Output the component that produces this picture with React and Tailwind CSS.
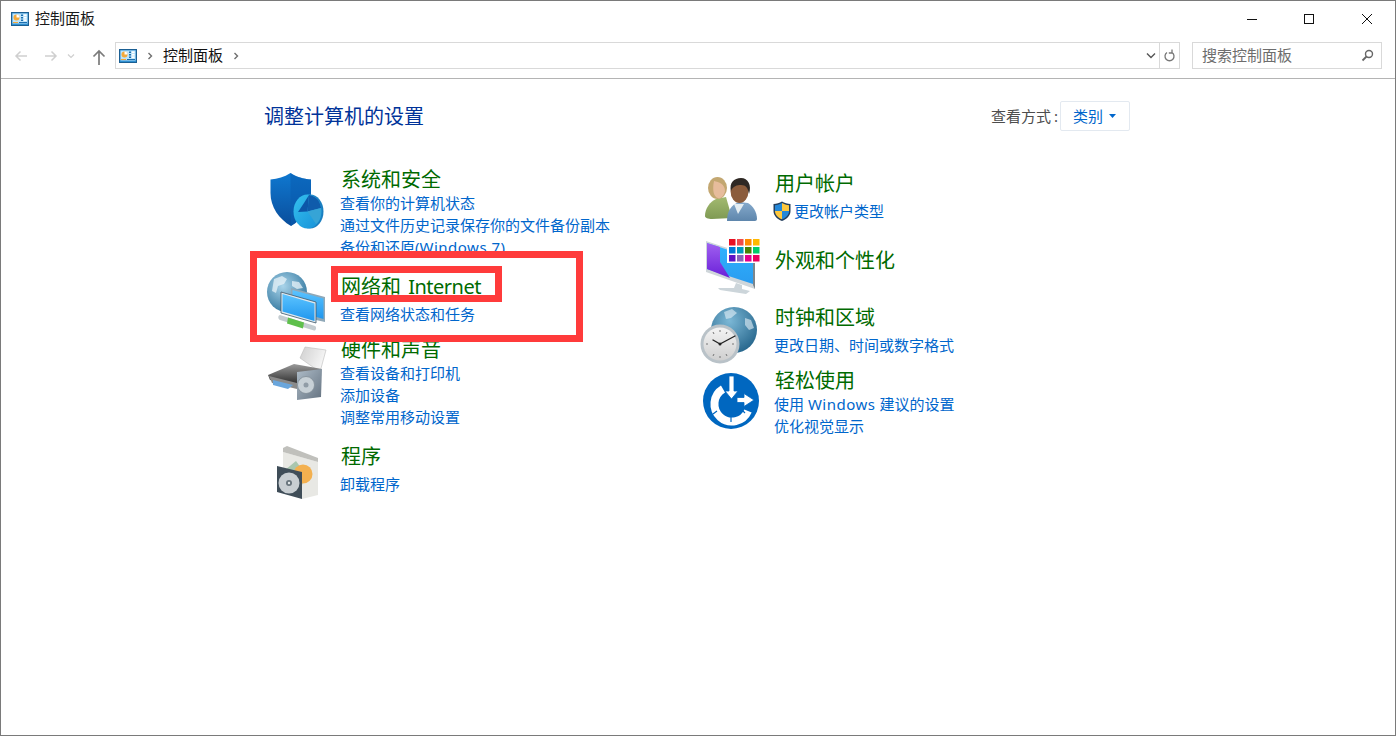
import React from "react";

const Grad = ({ id, a, b, x2 = 0, y2 = 1 }) => (
  <linearGradient id={id} x1="0" y1="0" x2={x2} y2={y2}>
    <stop offset="0" stopColor={a} />
    <stop offset="1" stopColor={b} />
  </linearGradient>
);

const PanelIcon = () => (
  <svg width="18" height="14" viewBox="0 0 18 14" className="shrink-0">
    <rect x="0.500" y="0.500" width="17" height="13" fill="#2f8fd0" stroke="#1b5f93" />
    <rect x="1.500" y="1.500" width="15" height="10" fill="#bfe4fa" />
    <circle cx="5.500" cy="5.500" r="3" fill="#f2a93b" />
    <path d="M5.500 5.500V2.500A3 3 0 0 1 8.500 5.500Z" fill="#fff" />
    <rect x="10" y="2.500" width="2" height="1.500" fill="#1b6fb0" />
    <rect x="13" y="2.500" width="2.500" height="1.500" fill="#fff" />
    <rect x="10" y="5" width="2" height="1.500" fill="#1b6fb0" />
    <rect x="13" y="5" width="2.500" height="1.500" fill="#fff" />
    <rect x="10" y="7.500" width="2" height="1.500" fill="#1b6fb0" />
    <rect x="13" y="7.500" width="2.500" height="1.500" fill="#fff" />
    <rect x="2" y="10" width="5" height="1" fill="#f2a93b" />
    <rect x="8" y="10" width="8" height="1" fill="#1b6fb0" />
  </svg>
);

const SecurityIcon = () => (
  <svg width="75" height="75" viewBox="265 167 75 75" className="shrink-0 overflow-visible">
    <defs>
      <Grad id="sh" a="#0f78d0" b="#0a4e9c" />
      <Grad id="dk" a="#35c0ee" b="#1590d8" x2={1} />
    </defs>
    <path d="M290.500 173C284 177 278 179 270.500 179.500L270.500 193C270.500 207 279 219 291 226C302 220 311 207 311 193L311 179.500C303 179 297 177 290.500 173Z" fill="url(#sh)" />
    <path d="M290.500 173C297 177 303 179 311 179.500L311 193C311 205 303 217 291 226Z" fill="#0a5cb0" opacity="0.55" />
    <ellipse cx="310" cy="211.500" rx="13.500" ry="17" fill="#1a7fc0" />
    <ellipse cx="307.500" cy="211.500" rx="14" ry="17" fill="url(#dk)" />
    <path d="M307.500 211.500L309 195C316 196 320 201 321 208Z" fill="#0f5bab" />
    <path d="M307.500 211.500L321 208C322 215 320 221 316 224Z" fill="#36a4d6" />
    <path d="M307.500 211.500L298 212L304 203L309 195Z" fill="#0c56a8" />
  </svg>
);

const NetworkIcon = () => (
  <svg width="75" height="63" viewBox="265 274 75 63" className="shrink-0 overflow-visible">
    <defs>
      <radialGradient id="gl" cx="0.4" cy="0.35" r="0.75">
        <stop offset="0" stopColor="#a9d4ea" />
        <stop offset="1" stopColor="#2a7099" />
      </radialGradient>
      <Grad id="scr" a="#5cc4ff" b="#1f96ee" />
    </defs>
    <circle cx="287" cy="292" r="20" fill="url(#gl)" />
    <path d="M274 279l8-3 5 3-3 5-6 2-2 7-4-2zM292 281l7 1 4 6-6 1-5-3zM283 296l7 3-1 7-4 3-3-6z" fill="#e8f3f8" opacity="0.75" />
    <path d="M291 288L325 297V322L316 320V302L291 295Z" fill="#8fa8b8" />
    <path d="M292.500 290L323.500 298.500V319L292.500 310Z" fill="url(#scr)" />
    <path d="M281 292L316 302V323L281 313Z" fill="#dfe9ef" stroke="#3d5768" strokeWidth="0.800" />
    <path d="M282.500 294L314.500 303.500V321L282.500 311.500Z" fill="url(#scr)" />
    <path d="M280 315L315 326C317 327 316 331 314 330.500L280 320C277.500 319 278 315 280 315Z" fill="#c4ccd0" />
    <path d="M288 317.500L304 322.500L303 328.500L287 323.500Z" fill="#5fc04c" />
  </svg>
);

const HardwareIcon = () => (
  <svg width="75" height="75" viewBox="265 337 75 75" className="shrink-0 overflow-visible">
    <defs>
      <Grad id="pb" a="#9a9a9a" b="#2e2e2e" />
      <Grad id="sp" a="#aebcc8" b="#647280" x2={1} y2={1} />
      <Grad id="pp" a="#d0d0d0" b="#f6f6f6" x2={1} y2={0.4} />
    </defs>
    <path d="M300 358L305 347L326 350L320 372Z" fill="url(#pp)" stroke="#bcbcbc" strokeWidth="0.600" />
    <path d="M268 375L294 364L322 369L297 384L270 380Z" fill="url(#pb)" />
    <path d="M269 376L297 383V389L272 383Z" fill="#8a8a8a" />
    <path d="M273 380L293 385L288 389L273 385Z" fill="#6aa6dc" />
    <path d="M297 372L322 369L321 397L297 400Z" fill="url(#sp)" />
    <circle cx="306" cy="385" r="8.500" fill="#c7d0d6" stroke="#808d97" strokeWidth="0.800" />
    <circle cx="306" cy="385" r="2.500" fill="#909ca6" />
  </svg>
);

const ProgramIcon = () => (
  <svg width="75" height="60" viewBox="265 444 75 60" className="shrink-0 overflow-visible">
    <path d="M283 452L318 462V495L302 499L283 490Z" fill="#e8e8e4" />
    <path d="M283 448L287 446L318 458L318 462L283 452Z" fill="#c0c0bc" />
    <path d="M285 470L296 461L306 475L300 490Z" fill="#a9c6ae" />
    <circle cx="303" cy="474" r="9.500" fill="#f3b04f" />
    <path d="M277 466L302 472V499L277 492Z" fill="#3f4d58" />
    <circle cx="289" cy="483" r="10.500" fill="#c8ced2" />
    <circle cx="289" cy="483" r="3" fill="#68747c" />
    <circle cx="289" cy="483" r="1.200" fill="#e4e8ea" />
  </svg>
);

const UsersIcon = () => (
  <svg width="75" height="70" viewBox="699 171 75 70" className="shrink-0 overflow-visible">
    <defs>
      <Grad id="wg" a="#a3ba70" b="#7f9a54" />
      <Grad id="mb" a="#86aacc" b="#5e86ac" />
    </defs>
    <path d="M705 216C705 208 710 202 716 199L726 197L732 218L712 219C708 219 705 218 705 216Z" fill="url(#wg)" />
    <ellipse cx="717.500" cy="188" rx="9.500" ry="11" fill="#c3a771" />
    <path d="M714 181C719 182 725 184 725 191C724 196 721 199 718 198C714 197 712 191 714 181Z" fill="#e6bc9c" />
    <path d="M727 221C727 211 731 205 739 202L748 203C753 206 757 212 757 219C757 220 756 221 755 221Z" fill="url(#mb)" />
    <path d="M734 204L738 214L744 204Z" fill="#e4edf2" />
    <ellipse cx="739.500" cy="191" rx="9" ry="12" fill="#8b5c3c" />
    <path d="M731 191C729 183 734 178 741 178C748 178 752 185 749 194C748 188 746 185 741 185C737 185 733 186 731 191Z" fill="#2e2824" />
  </svg>
);

const AppearanceIcon = () => {
  const colors = ["#e81123", "#f04b4b", "#ff8c00", "#ffb900", "#0078d7", "#0099bc", "#498205", "#00cc6a", "#5c13c4", "#8764b8", "#e3008c", "#ea005e"];
  return (
    <svg width="75" height="57" viewBox="699 248 75 57" className="shrink-0 overflow-visible">
      <defs>
        <Grad id="ms" a="#2fb4ff" b="#2a9cf0" />
        <Grad id="mp" a="#a060f0" b="#6a20d8" />
      </defs>
      <path d="M706 241L755 257V289L706 272Z" fill="#cfd6da" />
      <path d="M707 243L753 258V284L707 269Z" fill="url(#ms)" />
      <path d="M707 243L720 247L720 262L730 278L707 269Z" fill="url(#mp)" />
      <path d="M753 258L755 257V289L753 285Z" fill="#7c868c" />
      <path d="M736 283L742 285V289L750 291L746 294L720 290L718 288L734 288Z" fill="#ccd5da" />
      <rect x="727" y="237" width="33" height="26" fill="#fff" />
      {colors.map((c, i) => (
        <rect key={i} x={729 + (i % 4) * 8} y={239 + Math.floor(i / 4) * 8} width="6.500" height="6.500" fill={c} />
      ))}
    </svg>
  );
};

const ClockIcon = () => (
  <svg width="75" height="63" viewBox="699 305 75 63" className="shrink-0 overflow-visible">
    <defs>
      <radialGradient id="cg" cx="0.4" cy="0.3" r="0.8">
        <stop offset="0" stopColor="#7cb8d6" />
        <stop offset="1" stopColor="#1f5f86" />
      </radialGradient>
      <Grad id="cf" a="#f4f4f4" b="#cfcfcf" />
    </defs>
    <circle cx="734" cy="330" r="23" fill="url(#cg)" />
    <path d="M724 312l8-3 5 4-6 5-5 1zM745 318l6 2 3 8-5 2-4-5z" fill="#e4f0f6" opacity="0.6" />
    <circle cx="720" cy="344" r="19.500" fill="#b9c2c8" />
    <circle cx="720" cy="344" r="16.500" fill="url(#cf)" />
    <path d="M720 344L713 340M720 344L735 336" stroke="#222" strokeWidth="1.400" strokeLinecap="round" />
    <circle cx="720" cy="344" r="1.500" fill="#222" />
    <path d="M720 330v2M720 356v2M706 344h2M732 344h2M713 332l1 2M727 332l-1 2M713 356l1-2M727 356l-1-2" stroke="#777" strokeWidth="1" />
  </svg>
);

const EaseIcon = () => (
  <svg width="75" height="70" viewBox="699 368 75 70" className="shrink-0 overflow-visible">
    <circle cx="731" cy="401" r="28" fill="#0067c0" />
    <path d="M723 389A17.500 17.500 0 1 0 748 411" fill="none" stroke="#fff" strokeWidth="8" />
    <path d="M713 414l4-3M731 422v-5M745 413l-3-3" stroke="#0067c0" strokeWidth="1.200" />
    <path d="M729 376h5v15h4l-6.500 8-6.500-8h4z" fill="#fff" stroke="#0067c0" strokeWidth="0.800" />
    <path d="M737 397.500h7v-4l10 6.500-10 6.500v-4h-7z" fill="#fff" stroke="#0067c0" strokeWidth="0.800" />
  </svg>
);

const SmallShield = () => (
  <svg width="18" height="20" viewBox="0 0 18 20" className="shrink-0">
    <path d="M9 0.500C6.500 2 3.500 3 0.500 3V10C0.500 14.500 4 18 9 20C14 18 17.500 14.500 17.500 10V3C14.500 3 11.500 2 9 0.500Z" fill="#243f5e" />
    <path d="M9 2V10H2V4.200C4.500 4 7 3.200 9 2Z" fill="#2487d8" />
    <path d="M9 2C11 3.200 13.500 4 16 4.200V10H9Z" fill="#ffc83d" />
    <path d="M2 10H9V18.300C5 16.800 2 13.800 2 10Z" fill="#ffc83d" />
    <path d="M16 10H9V18.300C13 16.800 16 13.800 16 10Z" fill="#2487d8" />
  </svg>
);

const Title = ({ children, className = "" }) => (
  <div className={`h-6 pt-px text-[20px] leading-6 pl-px text-[#006a00] whitespace-nowrap ${className}`}>{children}</div>
);
const Link = ({ children }) => <div className="h-[22px] text-[15px] leading-[22px] text-[#0066cc] whitespace-nowrap">{children}</div>;

const Item = ({ icon, h, children }) => (
  <div className={`flex items-start ${h}`}>
    {icon}
    <div className="flex flex-col">{children}</div>
  </div>
);

export default function App() {
  return (
    <div className="relative h-[736px] w-[1396px] overflow-hidden border border-[#7a7a7a] bg-white font-['Noto_Sans','Noto_Sans_CJK_SC',sans-serif] text-[15px] text-[#1a1a1a]">
      {/* title bar */}
      <div className="flex h-[35px] items-center pl-[10px]">
        <PanelIcon />
        <span className="ml-[6px] leading-[35px]">控制面板</span>
        <div className="ml-auto flex items-center">
          <svg width="12" height="12" viewBox="0 0 12 12" className="mr-[45px]"><path d="M1 6.500H11" stroke="#111" /></svg>
          <svg width="12" height="12" viewBox="0 0 12 12" className="mr-[46px]"><rect x="1.500" y="1.500" width="9" height="9" fill="none" stroke="#111" /></svg>
          <svg width="12" height="12" viewBox="0 0 12 12" className="mr-[22px]"><path d="M1 1L11 11M11 1L1 11" stroke="#111" /></svg>
        </div>
      </div>
      {/* nav bar */}
      <div className="flex h-[43px] items-start border-b border-[#b4b4b4] pt-[6px]">
        <div className="flex h-[27px] w-[114px] items-center">
          <svg width="14" height="14" viewBox="0 0 14 14" className="ml-[13px]"><path d="M13 7H2M6.500 2.500L2 7l4.500 4.500" fill="none" stroke="#cfcfcf" strokeWidth="1.500" /></svg>
          <svg width="14" height="14" viewBox="0 0 14 14" className="ml-[16px]"><path d="M1 7H12M7.500 2.500L12 7l-4.500 4.500" fill="none" stroke="#cfcfcf" strokeWidth="1.500" /></svg>
          <svg width="8" height="6" viewBox="0 0 8 6" className="ml-[9px]"><path d="M1 1.500L4 4.500 7 1.500" fill="none" stroke="#cfcfcf" strokeWidth="1.200" /></svg>
          <svg width="14" height="16" viewBox="0 0 14 16" className="ml-[17px] mt-[3px]"><path d="M7 16V2M1.500 7.500L7 2l5.500 5.500" fill="none" stroke="#7b7b7b" strokeWidth="1.700" /></svg>
        </div>
        <div className="flex h-[27px] w-[1065px] items-center border border-[#d9d9d9] pl-[3px]">
          <PanelIcon />
          <svg width="6" height="8" viewBox="0 0 6 8" className="ml-[10px]"><path d="M1.500 1L4.500 4 1.500 7" fill="none" stroke="#6f6f6f" strokeWidth="1.400" /></svg>
          <span className="ml-[10px] text-[#111]">控制面板</span>
          <svg width="6" height="8" viewBox="0 0 6 8" className="ml-[10px]"><path d="M1.500 1L4.500 4 1.500 7" fill="none" stroke="#6f6f6f" strokeWidth="1.400" /></svg>
          <svg width="10" height="7" viewBox="0 0 10 7" className="ml-auto mr-[3px]"><path d="M1 1.500L5 5.500 9 1.500" fill="none" stroke="#555" strokeWidth="1.400" /></svg>
          <div className="flex h-full w-[20px] items-center justify-center border-l border-[#d9d9d9]">
            <svg width="12" height="13" viewBox="0 0 12 13"><path d="M3 3.500A4.500 4.500 0 1 0 8 3.500M8 0.500V4H4.800" fill="none" stroke="#777" strokeWidth="1.300" /></svg>
          </div>
        </div>
        <div className="ml-[12px] flex h-[27px] w-[190px] items-center border border-[#d9d9d9] pl-[9px] pr-[7px] text-[#6d6d6d]">
          <span>搜索控制面板</span>
          <svg width="13" height="13" viewBox="0 0 13 13" className="ml-auto"><circle cx="8" cy="5" r="3.500" fill="none" stroke="#666" strokeWidth="1.400" /><path d="M5.500 7.500L1.500 11.500" stroke="#666" strokeWidth="1.800" /></svg>
        </div>
      </div>
      {/* content header */}
      <div className="flex h-[88px] w-[1129px] items-start justify-between pl-[264px] pt-[22px]">
        <h1 className="-ml-px mt-px text-[20px] leading-[30px] text-[#003399]">调整计算机的设置</h1>
        <div className="flex items-center">
          <span className="text-[#4d4d4d]">查看方式<span className="ml-[3px]">:</span></span>
          <div className="ml-[2px] flex h-[30px] w-[70px] items-center rounded-[2px] border border-[#e3e9f0] pl-[12px] text-[#0066cc]">
            <span>类别</span>
            <svg width="7" height="4" viewBox="0 0 7 4" className="ml-[6px]"><path d="M0 0H7L3.500 4Z" fill="#0066cc" /></svg>
          </div>
        </div>
      </div>
      {/* columns */}
      <div className="flex pl-[264px]">
        <div className="flex w-[434px] flex-col">
          <Item icon={<SecurityIcon />} h="h-[107px]">
            <Title className="mb-px">系统和安全</Title>
            <Link>查看你的计算机状态</Link>
            <Link>通过文件历史记录保存你的文件备份副本</Link>
            <Link>备份和还原(<span className="tracking-[0.5px]">Windows 7</span>)</Link>
          </Item>
          <Item icon={<NetworkIcon />} h="h-[63px]">
            <Title className="mb-[5px]">网络和 <span className="ml-[2px] tracking-[-0.5px]">Internet</span></Title>
            <Link>查看网络状态和任务</Link>
          </Item>
          <Item icon={<HardwareIcon />} h="h-[107px]">
            <Title className="mb-px">硬件和声音</Title>
            <Link>查看设备和打印机</Link>
            <Link>添加设备</Link>
            <Link>调整常用移动设置</Link>
          </Item>
          <Item icon={<ProgramIcon />} h="h-[60px]">
            <Title className="mb-[5px]">程序</Title>
            <Link>卸载程序</Link>
          </Item>
        </div>
        <div className="flex flex-col pt-1">
          <Item icon={<UsersIcon />} h="h-[77px]">
            <Title className="mb-[5px]">用户帐户</Title>
            <div className="-ml-px flex items-center gap-[3px]">
              <SmallShield />
              <Link>更改帐户类型</Link>
            </div>
          </Item>
          <Item icon={<AppearanceIcon />} h="h-[57px]">
            <Title>外观和个性化</Title>
          </Item>
          <Item icon={<ClockIcon />} h="h-[63px]">
            <Title className="mb-[5px]">时钟和区域</Title>
            <Link>更改日期、时间或数字格式</Link>
          </Item>
          <Item icon={<EaseIcon />} h="h-[70px]">
            <Title className="mb-px">轻松使用</Title>
            <Link>使用 <span className="tracking-[0.5px]">Windows</span> 建议的设置</Link>
            <Link>优化视觉显示</Link>
          </Item>
        </div>
      </div>
      {/* red annotation boxes */}
      <div className="absolute left-[249px] top-[250px] h-[91px] w-[333px] border-[7px] border-[#ff3b3b]" />
      <div className="absolute left-[330px] top-[265px] h-[36px] w-[171px] border-[7px] border-[#ff3b3b]" />
    </div>
  );
}
